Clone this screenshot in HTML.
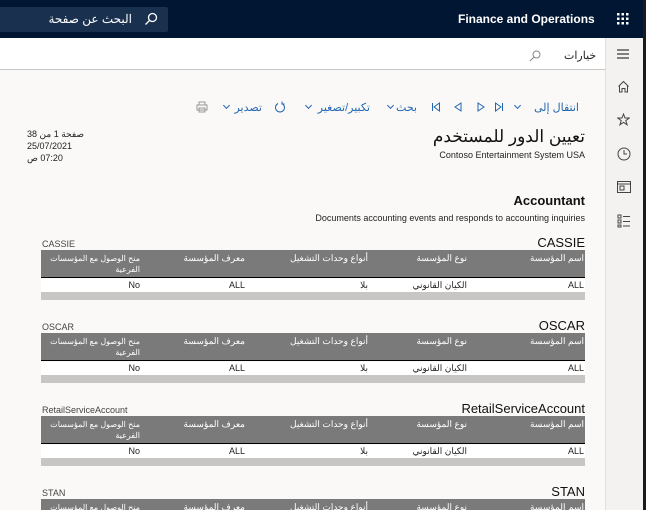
<!DOCTYPE html>
<html><head><meta charset="utf-8"><style>
*{margin:0;padding:0;box-sizing:border-box}
html,body{width:646px;height:510px;overflow:hidden}
body{background:#faf9f8;font-family:"Liberation Sans","Noto Sans CJK SC",sans-serif;position:relative}
.a{position:absolute;white-space:nowrap}
.top{position:absolute;left:0;top:0;width:646px;height:38px;background:#001633}
.srch{position:absolute;left:0;top:7px;width:168px;height:25px;background:#19304f;border-radius:0 2px 2px 0;color:#fff;font-size:12px}
.side{position:absolute;left:605px;top:38px;width:38px;height:472px;background:#f3f2f1;border-left:1px solid #e1dfdd}
.edge{position:absolute;left:643px;top:0;width:3px;height:510px;background:#1b1b1b}
.bar2{position:absolute;left:0;top:38px;width:605px;height:32px;background:#fff;border-bottom:1px solid #c8c6c4}
.tb{color:#2266b0;font-size:11px;direction:rtl}
.sec{position:absolute;left:41px;width:544px}
.hd{position:absolute;left:0;top:14px;width:544px;height:28px;background:#7a7a7a;border-bottom:1px solid #000;color:#fff;font-size:9px}
.rw{position:absolute;left:0;top:43px;width:544px;height:13px;background:#fff;font-size:9px;color:#222}
.gb{position:absolute;left:0;top:56px;width:544px;height:8px;background:#c8c6c4}
.c{position:absolute;text-align:right;direction:rtl;white-space:nowrap}
.m{font-size:8px;line-height:11px}
.chev{position:absolute;width:5px;height:5px;border-right:1px solid #2266b0;border-bottom:1px solid #2266b0;transform:rotate(45deg)}
</style></head><body>
<div class="top"></div>
<div class="srch"><span class="a" style="right:36px;top:5px;direction:rtl">البحث عن صفحة</span>
<svg class="a" style="left:144px;top:5px" width="14" height="14" viewBox="0 0 14 14"><circle cx="8.5" cy="5.5" r="4" fill="none" stroke="#fff" stroke-width="1.3"/><line x1="5.5" y1="8.5" x2="1.5" y2="12.5" stroke="#fff" stroke-width="1.3"/></svg></div>
<div class="a" style="left:458px;top:12px;color:#fff;font-size:12px;font-weight:bold">Finance and Operations</div>
<svg class="a" style="left:617px;top:13px" width="12" height="12"><g fill="#fff"><rect x="0" y="0" width="2.5" height="2.5"/><rect x="4.5" y="0" width="2.5" height="2.5"/><rect x="9" y="0" width="2.5" height="2.5"/><rect x="0" y="4.5" width="2.5" height="2.5"/><rect x="4.5" y="4.5" width="2.5" height="2.5"/><rect x="9" y="4.5" width="2.5" height="2.5"/><rect x="0" y="9" width="2.5" height="2.5"/><rect x="4.5" y="9" width="2.5" height="2.5"/><rect x="9" y="9" width="2.5" height="2.5"/></g></svg>
<div class="bar2"></div>
<div class="a" style="left:564px;top:49px;font-size:11px;color:#222;direction:rtl">خيارات</div>
<svg class="a" style="left:529px;top:50px" width="12" height="12"><circle cx="7.5" cy="4.5" r="3.5" fill="none" stroke="#888" stroke-width="1"/><line x1="5" y1="7" x2="1" y2="11" stroke="#888"/></svg>
<div class="side"></div>
<div class="edge"></div>
<svg class="a" style="left:616px;top:48px" width="14" height="12"><g stroke="#333" stroke-width="1.2"><line x1="1" y1="2" x2="13" y2="2"/><line x1="1" y1="6" x2="13" y2="6"/><line x1="1" y1="10" x2="13" y2="10"/></g></svg>
<svg class="a" style="left:617px;top:80px" width="13" height="13" fill="none" stroke="#444"><path d="M1.5 6.5 L6.5 1.5 L11.5 6.5 M2.5 5.5 V12 H5 V8.5 H8 V12 H10.5 V5.5"/></svg>
<svg class="a" style="left:617px;top:113px" width="13" height="13" fill="none" stroke="#444"><path d="M6.5 1 L8 5 L12.3 5 L8.8 7.6 L10.1 11.8 L6.5 9.3 L2.9 11.8 L4.2 7.6 L0.7 5 L5 5 Z"/></svg>
<svg class="a" style="left:617px;top:147px" width="14" height="14" fill="none" stroke="#444"><circle cx="7" cy="7" r="6"/><path d="M7 3 V7 H10"/></svg>
<svg class="a" style="left:617px;top:181px" width="14" height="12" fill="none" stroke="#444"><rect x="0.5" y="0.5" width="13" height="11"/><line x1="0.5" y1="3" x2="13.5" y2="3"/><rect x="3" y="5" width="4" height="4"/></svg>
<svg class="a" style="left:617px;top:214px" width="14" height="14" fill="none" stroke="#444"><rect x="1" y="1" width="3" height="3"/><rect x="1" y="6" width="3" height="3"/><rect x="1" y="11" width="3" height="2"/><path d="M6 2.5 H13 M6 7.5 H13 M6 12 H13"/></svg>
<!-- toolbar -->
<div class="a tb" style="right:67px;top:101px">انتقال إلى</div>
<div class="chev" style="left:515px;top:103px"></div>
<svg class="a" style="left:494px;top:102px" width="10" height="10" fill="none" stroke="#2266b0"><path d="M1.5 1 L7 5 L1.5 9 Z M8.5 1 V9"/></svg>
<svg class="a" style="left:476px;top:102px" width="10" height="10" fill="none" stroke="#2266b0"><path d="M2 1 L8 5 L2 9 Z"/></svg>
<svg class="a" style="left:453px;top:102px" width="10" height="10" fill="none" stroke="#2266b0"><path d="M8 1 L2 5 L8 9 Z"/></svg>
<svg class="a" style="left:431px;top:102px" width="10" height="10" fill="none" stroke="#2266b0"><path d="M8.5 1 L3 5 L8.5 9 Z M1.5 1 V9"/></svg>
<div class="a tb" style="right:229px;top:101px">بحث</div>
<div class="chev" style="left:388px;top:103px"></div>
<div class="a tb" style="right:276px;top:101px">تكبير/تصغير</div>
<div class="chev" style="left:306px;top:103px"></div>
<svg class="a" style="left:274px;top:101px" width="12" height="12" fill="none" stroke="#2266b0"><path d="M4 2.5 A4.5 4.5 0 1 0 8 2.5 M8 0.5 V3 H10.5"/></svg>
<div class="a tb" style="right:384px;top:101px">تصدير</div>
<div class="chev" style="left:224px;top:103px"></div>
<svg class="a" style="left:196px;top:101px" width="12" height="12" fill="none" stroke="#999"><rect x="3" y="1" width="6" height="3"/><rect x="1" y="4" width="10" height="5"/><rect x="3" y="7" width="6" height="4"/></svg>
<!-- header -->
<div class="a" style="left:27px;top:128px;font-size:9px;color:#222;direction:rtl;text-align:left;line-height:12px">صفحة 1 من 38<br>25/07/2021<br>07:20 ص</div>
<div class="a" style="right:61px;top:127px;font-size:17px;color:#111;direction:rtl">تعيين الدور للمستخدم</div>
<div class="a" style="right:61px;top:150px;font-size:9px;color:#222">Contoso Entertainment System USA</div>
<div class="a" style="right:61px;top:193px;font-size:13px;font-weight:bold;color:#111">Accountant</div>
<div class="a" style="right:61px;top:213px;font-size:9px;color:#222">Documents accounting events and responds to accounting inquiries</div>

<div class="sec" style="top:236px">
<div class="a" style="left:1px;top:3px;font-size:9px;color:#444">CASSIE</div>
<div class="a" style="right:0;top:-1px;font-size:13px;color:#111">CASSIE</div>
<div class="hd"><div class="c" style="right:1px;top:3px">اسم المؤسسة</div><div class="c" style="right:118px;top:3px">نوع المؤسسة</div><div class="c" style="right:217px;top:3px">أنواع وحدات التشغيل</div><div class="c" style="right:340px;top:3px">معرف المؤسسة</div><div class="c m" style="right:445px;top:3px">منح الوصول مع المؤسسات<br>الفرعية</div></div>
<div class="rw"><div class="c" style="right:1px;top:1px">ALL</div><div class="c" style="right:118px;top:1px">الكيان القانوني</div><div class="c" style="right:217px;top:1px">بلا</div><div class="c" style="right:340px;top:1px">ALL</div><div class="c" style="right:445px;top:1px">No</div></div>
<div class="gb"></div></div>

<div class="sec" style="top:319px">
<div class="a" style="left:1px;top:3px;font-size:9px;color:#444">OSCAR</div>
<div class="a" style="right:0;top:-1px;font-size:13px;color:#111">OSCAR</div>
<div class="hd"><div class="c" style="right:1px;top:3px">اسم المؤسسة</div><div class="c" style="right:118px;top:3px">نوع المؤسسة</div><div class="c" style="right:217px;top:3px">أنواع وحدات التشغيل</div><div class="c" style="right:340px;top:3px">معرف المؤسسة</div><div class="c m" style="right:445px;top:3px">منح الوصول مع المؤسسات<br>الفرعية</div></div>
<div class="rw"><div class="c" style="right:1px;top:1px">ALL</div><div class="c" style="right:118px;top:1px">الكيان القانوني</div><div class="c" style="right:217px;top:1px">بلا</div><div class="c" style="right:340px;top:1px">ALL</div><div class="c" style="right:445px;top:1px">No</div></div>
<div class="gb"></div></div>

<div class="sec" style="top:402px">
<div class="a" style="left:1px;top:3px;font-size:9px;color:#444">RetailServiceAccount</div>
<div class="a" style="right:0;top:-1px;font-size:13px;color:#111">RetailServiceAccount</div>
<div class="hd"><div class="c" style="right:1px;top:3px">اسم المؤسسة</div><div class="c" style="right:118px;top:3px">نوع المؤسسة</div><div class="c" style="right:217px;top:3px">أنواع وحدات التشغيل</div><div class="c" style="right:340px;top:3px">معرف المؤسسة</div><div class="c m" style="right:445px;top:3px">منح الوصول مع المؤسسات<br>الفرعية</div></div>
<div class="rw"><div class="c" style="right:1px;top:1px">ALL</div><div class="c" style="right:118px;top:1px">الكيان القانوني</div><div class="c" style="right:217px;top:1px">بلا</div><div class="c" style="right:340px;top:1px">ALL</div><div class="c" style="right:445px;top:1px">No</div></div>
<div class="gb"></div></div>

<div class="sec" style="top:485px;height:25px;overflow:hidden">
<div class="a" style="left:1px;top:3px;font-size:9px;color:#444">STAN</div>
<div class="a" style="right:0;top:-1px;font-size:13px;color:#111">STAN</div>
<div class="hd"><div class="c" style="right:1px;top:3px">اسم المؤسسة</div><div class="c" style="right:118px;top:3px">نوع المؤسسة</div><div class="c" style="right:217px;top:3px">أنواع وحدات التشغيل</div><div class="c" style="right:340px;top:3px">معرف المؤسسة</div><div class="c m" style="right:445px;top:3px">منح الوصول مع المؤسسات</div></div>
</div>
</body></html>
